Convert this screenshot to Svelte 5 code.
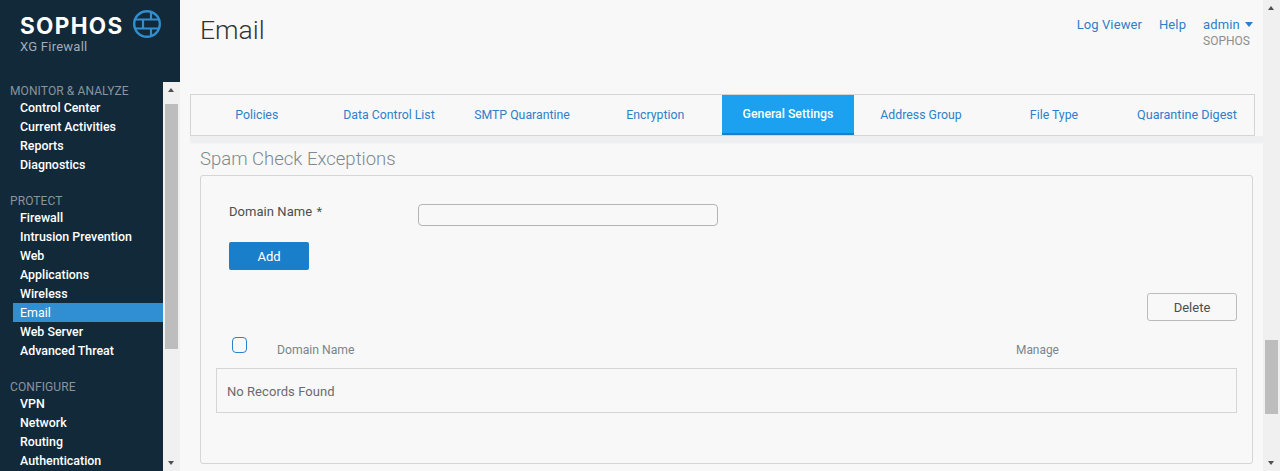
<script>
  const nav = [
    { title: 'MONITOR & ANALYZE', items: ['Control Center', 'Current Activities', 'Reports', 'Diagnostics'] },
    { title: 'PROTECT', items: ['Firewall', 'Intrusion Prevention', 'Web', 'Applications', 'Wireless', 'Email', 'Web Server', 'Advanced Threat'] },
    { title: 'CONFIGURE', items: ['VPN', 'Network', 'Routing', 'Authentication'] }
  ];
  const tabs = [
    ['Policies', 131.5], ['Data Control List', 133], ['SMTP Quarantine', 133], ['Encryption', 133.5],
    ['General Settings', 132], ['Address Group', 134], ['File Type', 132], ['Quarantine Digest', 134]
  ];
</script>

<div class="page">
  <aside class="sidebar">
    <div class="brand">
      <div class="logo-row">
        <span class="wordmark">SOPHOS</span>
        <svg class="globe" width="30" height="30" viewBox="0 0 30 30" fill="none" stroke="#2f8fd0" stroke-width="2.2">
          <circle cx="15" cy="15" r="12.8" stroke-width="2.4" />
          <path d="M3.2 10.5H26.8M3.2 19.5H26.8M19 2.8V10.5M11 10.5V19.5M19 19.5V27.2" />
        </svg>
      </div>
      <div class="product">XG Firewall</div>
    </div>
    <div class="nav-wrap">
      <nav class="nav">
        {#each nav as group}
          <div class="group">
            <div class="group-title">{group.title}</div>
            {#each group.items as item}
              <div class="item" class:active={item === 'Email'}>{item}</div>
            {/each}
          </div>
        {/each}
      </nav>
      <div class="scrollbar nav-bar">
        <span class="arrow up"></span>
        <div class="track"><div class="thumb"></div></div>
        <span class="arrow down"></span>
      </div>
    </div>
  </aside>

  <main class="main">
    <header class="top">
      <h1>Email</h1>
      <div class="links">
        <span class="link">Log Viewer</span>
        <span class="link">Help</span>
        <div class="user">
          <span class="link">admin <i class="caret"></i></span>
          <span class="org">SOPHOS</span>
        </div>
      </div>
    </header>

    <div class="tabs">
      {#each tabs as [label, w]}
        <div class="tab" class:on={label === 'General Settings'} class:wide={label === 'Quarantine Digest'} style="width:{w}px">{label}</div>
      {/each}
    </div>
    <div class="tabs-shade"></div>

    <h2>Spam Check Exceptions</h2>

    <section class="card">
      <div class="field">
        <label for="dn">Domain Name <span class="req">*</span></label>
        <input id="dn" type="text" />
      </div>
      <button class="add">Add</button>
      <div class="actions"><button class="delete">Delete</button></div>
      <div class="thead">
        <span class="check"></span>
        <span class="col name">Domain Name</span>
        <span class="col manage">Manage</span>
      </div>
      <div class="empty">No Records Found</div>
    </section>
  </main>

  <div class="scrollbar page-bar">
    <span class="arrow up"></span>
    <div class="track"><div class="thumb"></div></div>
    <span class="arrow down"></span>
  </div>
</div>

<style>
  :global(body) { margin: 0; background: #f8f8f8; }
  .page {
    display: flex;
    width: 1280px;
    height: 471px;
    overflow: hidden;
    font-family: Roboto, "Liberation Sans", sans-serif;
    font-size: 13px;
    background: #f8f8f8;
  }
  .sidebar {
    flex: 0 0 180px;
    display: flex;
    flex-direction: column;
    background: #12293a;
    min-height: 0;
  }
  .brand { height: 82px; padding: 9px 0 0 20px; box-sizing: border-box; flex: none; }
  .logo-row { display: flex; align-items: center; height: 30px; }
  .wordmark {
    font-family: Inter, sans-serif;
    font-weight: 700;
    font-size: 22.5px;
    line-height: 28px;
    margin-top: 3px;
    color: #fff;
    letter-spacing: 1.35px;
    width: 112px;
    flex: none;
  }
  .globe { flex: none; }
  .product { color: #a3adb5; font-size: 13px; line-height: 16px; letter-spacing: 0.25px; }
  .nav-wrap { flex: 1; display: flex; min-height: 0; }
  .nav { flex: 1; min-width: 0; overflow: hidden; }
  .group { padding-bottom: 18px; }
  .group-title { color: #8b949b; font-size: 12px; line-height: 19px; padding-left: 10px; letter-spacing: 0.1px; height: 16px; }
  .item {
    margin-left: 13px;
    padding-left: 7px;
    height: 19px;
    line-height: 19px;
    font-size: 12.4px;
    font-weight: 500;
    color: #fff;
  }
  .item.active { background: #2f8fd2; font-weight: 400; }

  .scrollbar {
    flex: 0 0 17px;
    display: flex;
    flex-direction: column;
    background: #f0f0f0;
    align-items: center;
  }
  .arrow { flex: 0 0 17px; width: 100%; position: relative; }
  .arrow::after {
    content: '';
    position: absolute;
    left: 5px;
    border-left: 3.5px solid transparent;
    border-right: 3.5px solid transparent;
  }
  .arrow.up::after { top: 6px; border-bottom: 4px solid #505050; }
  .arrow.down::after { bottom: 6px; border-top: 4px solid #505050; }
  .track { flex: 1; width: 100%; position: relative; }
  .thumb { position: absolute; left: 2px; right: 2px; background: #bdbdbd; }
  .nav-bar .thumb { top: 5px; height: 245px; }
  .page-bar .thumb { top: 323px; height: 74px; }

  .main { flex: 1; min-width: 0; padding-left: 10px; padding-right: 8px; }
  .top { height: 94px; display: flex; justify-content: space-between; box-sizing: border-box; }
  h1 { margin: 13px 0 0 10px; font-weight: 300; font-size: 26.5px; line-height: 34px; color: #333; }
  .links { display: flex; gap: 17px; padding-top: 16px; padding-right: 2px; line-height: 17px; }
  .link { color: #2f7fc8; font-size: 13px; letter-spacing: 0.1px; }
  .user { display: flex; flex-direction: column; }
  .org { color: #8d8d8d; font-size: 12px; line-height: 17px; letter-spacing: 0; }
  .caret {
    display: inline-block;
    margin-left: 2px;
    vertical-align: 2px;
    border-left: 4px solid transparent;
    border-right: 4px solid transparent;
    border-top: 5px solid #2f7fc8;
  }

  .tabs {
    display: flex;
    height: 42px;
    box-sizing: border-box;
    border: 1px solid #d5d5d5;
    width: 1065px;
  }
  .tab {
    flex: none;
    text-align: center;
    line-height: 41px;
    font-size: 12.3px;
    color: #2f7fc8;
  }
  .tab.wide { font-size: 12.6px; line-height: 39px; }
  .tab.on {
    background: #1ba1f0;
    color: #fff;
    font-weight: 500;
    height: 40px;
    line-height: 39px;
    box-sizing: border-box;
    border-bottom: 2px solid #1a7fcb;
  }
  .tabs-shade {
    height: 9px;
    width: 1073px;
    background: linear-gradient(#eeeff1 70%, #f3f6f9 85%, #f8f8f8);
  }
  h2 {
    margin: 3px 0 0 10px;
    font-weight: 300;
    font-size: 18.5px;
    line-height: 22px;
    color: #7f888f;
  }
  .card {
    margin: 5px 0 0 10px;
    width: 1053px;
    height: 289px;
    box-sizing: border-box;
    border: 1px solid #d5d5d5;
    border-radius: 3px;
    padding: 28px 15px 0;
  }
  .field { display: flex; align-items: center; padding-left: 13px; height: 22px; }
  .field label { width: 189px; color: #4d4d4d; font-size: 13px; position: relative; top: -4px; letter-spacing: 0.05px; }
  .req { color: #4d5a66; margin-left: 1px; }
  input {
    width: 300px;
    height: 22px;
    box-sizing: border-box;
    border: 1px solid #b4b4b4;
    border-radius: 4px;
    background: #f8f8f8;
    padding: 0;
  }
  .add {
    display: block;
    margin: 16px 0 0 13px;
    width: 80px;
    height: 28px;
    border: 0;
    border-radius: 2px;
    background: #1a7fcb;
    color: #fff;
    font: 400 13px Roboto, sans-serif;
  }
  .actions { display: flex; justify-content: flex-end; margin-top: 23px; }
  .delete {
    width: 90px;
    height: 28px;
    background: #f8f8f8;
    border: 1px solid #bcbcbc;
    border-radius: 3px;
    color: #4d4d4d;
    font: 400 13px Roboto, sans-serif;
  }
  .thead { position: relative; height: 47px; }
  .check {
    position: absolute;
    left: 16px;
    top: 16px;
    width: 15px;
    height: 16px;
    box-sizing: border-box;
    border: 1.5px solid #2f80c8;
    border-radius: 4px;
  }
  .col { position: absolute; top: 21px; color: #7b858c; font-size: 12.2px; line-height: 17px; }
  .name { left: 61px; }
  .manage { left: 800px; font-size: 11.9px; }
  .empty {
    height: 45px;
    box-sizing: border-box;
    border: 1px solid #d5d5d5;
    padding-left: 10px;
    line-height: 45px;
    color: #6b6b6b;
    letter-spacing: 0.05px;
  }
</style>
